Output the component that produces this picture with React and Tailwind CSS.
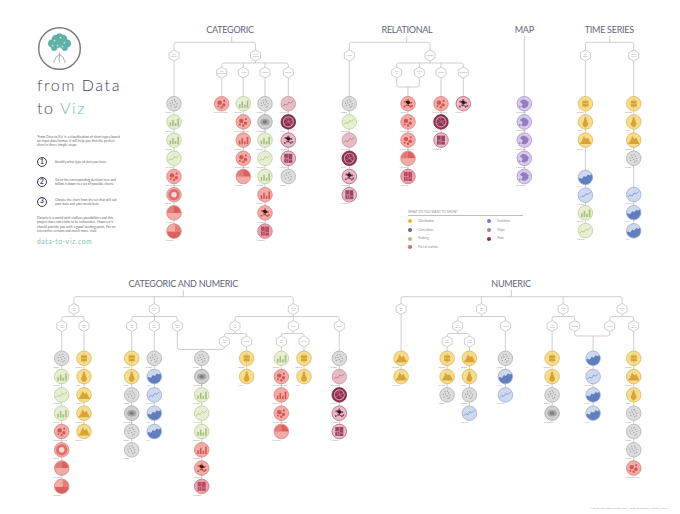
import React from 'react'

const LINE = '#b9b9b9'

// fill, stroke, glyph colour, glyph
const K = {
  gray: ['#dcdcdc', '#a9a9a9', '#8a8a8a', 'scatter'],
  grayB: ['#cfcfcf', '#9f9f9f', '#6f6f6f', 'blob'],
  green: ['#e6eed3', '#b5ca8c', '#9bb768', 'bars'],
  greenL: ['#e6eed3', '#b5ca8c', '#9bb768', 'line'],
  red: ['#f1aca8', '#d97873', '#d4443f', 'bubbles'],
  redRing: ['#f1aca8', '#d97873', '#e0625c', 'ring'],
  redPie: ['#f1aca8', '#d97873', '#d9534f', 'pie'],
  redPie2: ['#f1aca8', '#d97873', '#d9534f', 'pie2'],
  redBars: ['#f1aca8', '#d97873', '#d4443f', 'bars'],
  redDots: ['#f1aca8', '#d97873', '#c8403d', 'dots'],
  redSquare: ['#e8a3ab', '#c46a78', '#b23a55', 'treemap'],
  mauve: ['#e6bdc7', '#c98a9b', '#b0536f', 'line'],
  maroon: ['#8c2f50', '#6e1e3a', '#e5a5b8', 'chord'],
  maroonDots: ['#e6bdc7', '#b0536f', '#8c2f50', 'dots'],
  mauveSquare: ['#e6bdc7', '#b0536f', '#8c2f50', 'treemap'],
  Y: ['#f5dd90', '#d8b04a', '#d29b24', 'square'],
  Ym: ['#f5dd90', '#d8b04a', '#d29b24', 'mountain'],
  Yv: ['#f5dd90', '#d8b04a', '#d29b24', 'violin'],
  B: ['#cfd9ee', '#8ea5d4', '#5a78bd', 'line'],
  Bd: ['#cfd9ee', '#8ea5d4', '#4d6db5', 'area'],
  P: ['#d8cbea', '#9f86c7', '#7b5fb0', 'map'],
}

const NAMES = {
  scatter: 'Scatter', blob: '2D density', bars: 'Barplot', line: 'Line plot',
  bubbles: 'Circular packing', ring: 'Donut', pie: 'Pie chart', pie2: 'Treemap',
  treemap: 'Heatmap', chord: 'Chord', dots: 'Network', square: 'Boxplot',
  mountain: 'Density', violin: 'Violin', area: 'Area', map: 'Choropleth',
}

function Glyph({ ic, c, f }) {
  switch (ic) {
    case 'scatter':
      return [[-3, 2], [-1.5, -1], [0, 1], [1.5, -2], [3, 0], [-2, -3.2], [2.5, 2.6], [0.5, -3.8], [-3.8, -0.5], [1, 3.5]].map(([x, y], i) => (
        <circle key={i} cx={x} cy={y} r={0.6} fill={c} />
      ))
    case 'blob':
      return (
        <>
          <ellipse rx={4.5} ry={3.2} fill={c} opacity={0.5} />
          <ellipse rx={2.2} ry={1.6} fill={c} />
        </>
      )
    case 'bars':
      return [[-4.4, 0.5], [-1.8, -2], [0.8, 1], [3.4, -3.2]].map(([x, y], i) => (
        <rect key={i} x={x} y={y} width={1.6} height={4.2 - y} fill={c} />
      ))
    case 'line':
      return <polyline points="-5.5,2.5 -3.5,0.5 -1.5,1.5 0.5,-1.5 2.5,-0.5 5,-3" fill="none" stroke={c} strokeWidth={0.7} />
    case 'bubbles':
      return [[-2, -1, 2.2], [2.2, 1.2, 1.7], [0, 3.6, 1.2], [2.6, -2.8, 1.1], [-3.4, 2.6, 1]].map(([x, y, r], i) => (
        <circle key={i} cx={x} cy={y} r={r} fill={c} />
      ))
    case 'ring':
      return (
        <>
          <circle r={5.6} fill={c} />
          <circle r={2.8} fill="#fbe3e1" />
        </>
      )
    case 'pie':
      return (
        <>
          <path d="M0 0 V-7 A7 7 0 0 1 7 0 Z" fill={c} />
          <path d="M0 0 H-7 A7 7 0 0 1 0 -7 Z" fill={c} opacity={0.65} />
        </>
      )
    case 'pie2':
      return (
        <>
          <path d="M-7 0.5 H7 V7 H-7 Z" fill={c} />
          <path d="M1 -7 V0.5 H7 V-7 Z" fill={c} opacity={0.6} />
        </>
      )
    case 'treemap':
      return (
        <>
          <rect x={-4} y={-4.5} width={8} height={9} fill={c} />
          <path d="M0 -4.5 V4.5 M-4 0 H0 M0 1.5 H4 M-2 0 V4.5" stroke={f} strokeWidth={0.5} />
        </>
      )
    case 'chord':
      return (
        <>
          <circle r={5} fill="none" stroke={c} strokeWidth={1.1} />
          <path d="M-3.5 -3.5 Q0 0 3.5 3.5 M-4.5 2 Q0 0 4.5 -2 M-1 -4.8 Q0 0 4 3" fill="none" stroke={c} strokeWidth={0.5} />
        </>
      )
    case 'dots':
      return (
        <>
          <path d="M-3 -2 L0 -3.6 L3 -1 L-1 1.5 L2.5 3 M-1 1.5 L-3.5 2.8 M-3 -2 L-1 1.5" stroke={c} strokeWidth={0.3} />
          {[[-3, -2], [0, -3.6], [3, -1], [-1, 1.5], [2.5, 3], [-3.5, 2.8], [4, 2]].map(([x, y], i) => (
            <circle key={i} cx={x} cy={y} r={1} fill={c} />
          ))}
        </>
      )
    case 'square':
      return (
        <>
          <rect x={-3} y={-3} width={6} height={6} fill={c} />
          <path d="M-3 0 H3 M0 -5 V-3 M0 3 V5" stroke={c} strokeWidth={0.5} />
          <path d="M-3 0 H3" stroke={f} strokeWidth={0.5} />
        </>
      )
    case 'mountain':
      return <path d="M-6 4 L-3.5 1 L-1.5 -4 L0.5 -1 L2.5 -2.5 L6 4 Z" fill={c} />
    case 'violin':
      return <path d="M0 -5.5 C1.8 -3.5 0.8 -1.5 2.6 0.8 C3.8 3 1.2 4.8 0 5.5 C-1.2 4.8 -3.8 3 -2.6 0.8 C-0.8 -1.5 -1.8 -3.5 0 -5.5 Z" fill={c} />
    case 'area':
      return <polygon points="-8,8 -8,1.5 -5.5,0.5 -3.5,1.5 -1.5,-1.5 0.5,-0.5 2.5,-3 4.5,-2 8,-4.5 8,8" fill={c} />
    case 'map':
      return (
        <>
          <polygon points="-4.5,-2 -1.5,-4.5 2,-3.5 4.5,-1 3.5,2.5 0.5,4.5 -3,3.5 -1.5,0.5" fill={c} opacity={0.85} />
          <circle cx={-4.5} cy={3} r={0.8} fill={c} />
        </>
      )
    default:
      return null
  }
}

function Dot({ x, y, k }) {
  const [f, s, c, ic] = K[k]
  return (
    <g>
      <g transform={`translate(${x} ${y})`}>
        <circle r={7.3} fill={f} stroke={s} strokeWidth={0.7} />
        <g clipPath="url(#clipc)" opacity={0.85}>
          <Glyph ic={ic} c={c} f={f} />
        </g>
      </g>
      <text x={x - 8.5} y={y + 9.6} fontSize={2} fill="#9a9a9a">{NAMES[ic]}</text>
    </g>
  )
}

function Hex({ x, y, label }) {
  const pts = `${x},${y - 5.5} ${x + 5},${y - 2.6} ${x + 5},${y + 2.6} ${x},${y + 5.5} ${x - 5},${y + 2.6} ${x - 5},${y - 2.6}`
  const words = label.split(' ')
  return (
    <g>
      <polygon points={pts} fill="#fff" stroke={LINE} strokeWidth={0.7} />
      {words.map((w, i) => (
        <text key={i} x={x} y={y - (words.length - 1) * 1 + i * 2 + 0.6} fontSize={1.6} fill="#999" textAnchor="middle">{w}</text>
      ))}
    </g>
  )
}

function Col({ x, top, k, y0, sp, ys }) {
  const pos = ys || k.map((_, i) => y0 + i * sp)
  return (
    <g>
      <path d={`M${x} ${top} V${pos[pos.length - 1]}`} stroke={LINE} strokeWidth={0.7} fill="none" />
      {k.map((kk, i) => (
        <Dot key={i} x={x} y={pos[i]} k={kk} />
      ))}
    </g>
  )
}

const V = (x, a, b) => `M${x} ${a} V${b}`
const bar = (x1, x2, y, d1, d2, r = 2) =>
  `M${x1} ${d1} V${y + r} Q${x1} ${y} ${x1 + r} ${y} H${x2 - r} Q${x2} ${y} ${x2} ${y + r} V${d2}`
const join = (x1, x2, y, u1, u2, r = 2) =>
  `M${x1} ${u1} V${y - r} Q${x1} ${y} ${x1 + r} ${y} H${x2 - r} Q${x2} ${y} ${x2} ${y - r} V${u2}`

function Tree({ paths = [], hexes = [], cols = [], y0, sp }) {
  return (
    <g>
      <defs>
        <clipPath id="clipc">
          <circle r={6.9} />
        </clipPath>
      </defs>
      {paths.map((d, i) => (
        <path key={i} d={d} stroke={LINE} strokeWidth={0.7} fill="none" />
      ))}
      {cols.map((c, i) => (
        <Col key={i} {...c} y0={y0} sp={sp} />
      ))}
      {hexes.map(([x, y, l], i) => (
        <Hex key={i} x={x} y={y} label={l} />
      ))}
    </g>
  )
}

function Section({ className, title, x0, y0, w, h, children }) {
  return (
    <div className={`flex flex-col shrink-0 ${className}`}>
      <div className="h-[13px] text-center text-[9px] leading-[13px] tracking-[-0.03em] text-[#62667a] whitespace-nowrap">{title}</div>
      <svg width={w} height={h} viewBox={`${x0} ${y0} ${w} ${h}`} className="block overflow-visible">
        {children}
      </svg>
    </div>
  )
}

const TY = 103.7
const TS = 18.2
const BY = 358.3
const BS = 18.3

function Logo() {
  return (
    <svg width="45" height="45" viewBox="0 0 46 46">
      <circle cx="23" cy="23" r="21.3" fill="#fff" stroke="#7b7b7b" strokeWidth="1.5" />
      <path d="M23 25 V31 M23 29 Q19 31 18 35 M23 29 Q27 31 28 35 M23 31 Q22 34 23 37 M18 35 q-2 2 0 3 M28 35 q2 2 0 3" stroke="#8a8a8a" strokeWidth="0.7" fill="none" />
      {[[15.5, 18, 4.2], [19.5, 13.5, 4.6], [26.5, 13.5, 4.6], [30.5, 18, 4.2], [23, 18.5, 5], [17.5, 22.5, 3], [28.5, 22.5, 3], [23, 10.5, 3.2]].map(([x, y, r], i) => (
        <circle key={i} cx={x} cy={y} r={r} fill="#5fb3a5" />
      ))}
      {[[18, 15], [24, 12], [28, 17], [21, 20], [16, 20], [26, 21]].map(([x, y], i) => (
        <circle key={i} cx={x} cy={y} r="0.9" fill="#bfe3dc" />
      ))}
      <rect x="21.8" y="22" width="2.4" height="5" fill="#fff" />
    </svg>
  )
}

function Step({ n, children, className }) {
  return (
    <div className={`flex items-center ${className}`}>
      <div className="w-[10px] h-[10px] shrink-0 rounded-full border border-[#3d3e5e] flex items-center justify-center text-[6.5px] font-bold leading-none text-[#3d3e5e]">{n}</div>
      <div className="ml-[8px] w-[66px] text-[3.3px] leading-[4px] text-[#6a6a6a]">{children}</div>
    </div>
  )
}

function Intro() {
  return (
    <div className="w-[160px] shrink-0 pl-[37px] pt-[2.5px] flex flex-col">
      <Logo />
      <div className="mt-[2.8px] h-[23px] text-[16px] leading-[23px] tracking-[0.1em] font-light text-[#4a4a55] whitespace-nowrap">
        from <span className="text-[#3a3b63]">Data</span>
      </div>
      <div className="h-[23px] text-[16px] leading-[23px] tracking-[0.1em] font-light text-[#4a4a55] whitespace-nowrap">
        to <span className="text-[#6fbaad]">Viz</span>
      </div>
      <p className="mt-[15.3px] w-[84px] text-[3.4px] leading-[4.2px] text-[#6a6a6a]">
        ‘From Data to Viz’ is a classification of chart types based on input data format. It will help you find the perfect chart in three simple steps:
      </p>
      <Step n="1" className="mt-[10px]">Identify what type of data you have.</Step>
      <Step n="2" className="mt-[10px]">Go to the corresponding decision tree and follow it down to a set of possible charts.</Step>
      <Step n="3" className="mt-[9.4px]">Choose the chart from the set that will suit your data and your needs best.</Step>
      <p className="mt-[9.5px] w-[84px] text-[3.4px] leading-[4.2px] text-[#6a6a6a]">
        Dataviz is a world with endless possibilities and this project does not claim to be exhaustive. However it should provide you with a good starting point. For an interactive version and much more, visit:
      </p>
      <div className="mt-[4.5px] text-[6.6px] leading-[8px] tracking-[0.1em] text-[#7fbdb3]">data-to-viz.com</div>
    </div>
  )
}

const LEGEND = [
  ['Distribution', 'bg-[#e8b93a]'],
  ['Evolution', 'bg-[#6a7fc0]'],
  ['Correlation', 'bg-[#6b6d70]'],
  ['Maps', 'bg-[#9a7cc0]'],
  ['Ranking', 'bg-[#a9c57a]'],
  ['Flow', 'bg-[#8c2f50]'],
  ['Part of a whole', 'bg-[#e0605a]'],
]

function Legend() {
  return (
    <div className="ml-[68.3px] mt-[1.7px] w-[115px]">
      <div className="border-b border-[#bdbdbd] pb-[1px] text-[3px] leading-[4px] tracking-[0.03em] text-[#8a8a8a]">WHAT DO YOU WANT TO SHOW?</div>
      <div className="mt-[1.4px] grid grid-cols-[79px_1fr]">
        {LEGEND.map(([l, c]) => (
          <div key={l} className="flex h-[8.6px] items-center">
            <div className={`w-[4px] h-[4px] rounded-full ${c}`} />
            <span className="ml-[6px] text-[3px] text-[#8a8a8a]">{l}</span>
          </div>
        ))}
      </div>
    </div>
  )
}

export default function App() {
  return (
    <div className="w-[680px] h-[514px] overflow-hidden bg-white font-['Lato',sans-serif] flex flex-col">
      <div className="flex items-start h-[262px] pt-[23px] shrink-0">
        <Intro />
        <Section className="w-[140px]" title="CATEGORIC" x0={160} y0={36} w={140} h={214}>
          <Tree
            y0={TY}
            sp={TS}
            paths={[V(231.7, 36, 42.3), bar(174, 255.5, 42.3, 50, 50), V(255.5, 61, 63), bar(221.7, 288.3, 63, 67, 67), V(243.3, 63, 67), V(265, 63, 67)]}
            hexes={[[174, 55.5, 'One variable'], [255.5, 55.5, 'Several variables'], [221.7, 72.5, 'Two independent'], [243.3, 72.5, 'Nested'], [265, 72.5, 'Subgroup'], [288.3, 72.5, 'Adjacency']]}
            cols={[
              { x: 174, top: 61, k: ['gray', 'green', 'green', 'greenL', 'red', 'redRing', 'redPie', 'redPie2'] },
              { x: 221.7, top: 78, k: ['red'] },
              { x: 243.3, top: 78, k: ['green', 'red', 'redBars', 'red', 'redPie'] },
              { x: 265, top: 78, k: ['gray', 'grayB', 'green', 'greenL', 'green', 'redBars', 'redDots', 'redSquare'] },
              { x: 288.3, top: 78, k: ['mauve', 'maroon', 'maroonDots', 'mauveSquare', 'gray'] },
            ]}
          />
        </Section>
        <div className="w-[40px] shrink-0" />
        <div className="flex flex-col w-[234.6px] shrink-0">
          <div className="flex">
            <Section className="w-[134px]" title="RELATIONAL" x0={340} y0={36} w={134} h={172}>
              <Tree
                y0={TY}
                sp={TS}
                paths={[
                  V(406.7, 36, 42.3), bar(349.3, 430, 42.3, 50, 50), V(430, 61, 63), bar(396.7, 463.3, 63, 67, 67),
                  V(419.3, 63, 67), V(441, 63, 67), join(396.7, 419.3, 87, 78, 78),
                ]}
                hexes={[[349.3, 55.5, 'Nested'], [430, 55.5, 'Adjacency'], [396.7, 72.5, 'Two var'], [419.3, 72.5, 'Several var'], [441, 72.5, 'Directed'], [463.3, 72.5, 'Undirected']]}
                cols={[
                  { x: 349.3, top: 61, k: ['gray', 'greenL', 'mauve', 'maroon', 'maroonDots', 'mauveSquare'] },
                  { x: 408, top: 87, k: ['redDots', 'red', 'red', 'redPie', 'redSquare'] },
                  { x: 441, top: 78, k: ['red', 'maroon', 'mauveSquare'] },
                  { x: 463.3, top: 78, k: ['maroonDots'] },
                ]}
              />
            </Section>
            <Section className="w-[100.6px]" title="MAP" x0={474} y0={36} w={100.6} h={172}>
              <Tree y0={TY} sp={TS} cols={[{ x: 524.3, top: 36, k: ['P', 'P', 'P', 'P', 'P'] }]} />
            </Section>
          </div>
          <Legend />
        </div>
        <Section className="w-[69.4px]" title="TIME SERIES" x0={574.6} y0={36} w={69.4} h={214}>
          <Tree
            y0={TY}
            sp={TS}
            paths={[V(609.3, 36, 42.3), bar(585, 633.3, 42.3, 50, 50)]}
            hexes={[[585, 55.5, 'One series'], [633.3, 55.5, 'Several series']]}
            cols={[
              { x: 585, top: 61, k: ['Y', 'Yv', 'Ym', 'Bd', 'B', 'green', 'greenL'], ys: [103.7, 121.9, 140.1, 177.5, 195.2, 212.9, 230.6] },
              { x: 633.3, top: 61, k: ['Y', 'Yv', 'Ym', 'gray', 'B', 'Bd', 'Bd'], ys: [103.7, 121.9, 140.1, 158.3, 194.5, 212.7, 230.9] },
            ]}
          />
        </Section>
      </div>

      <div className="flex items-start pt-[14.8px] shrink-0">
        <Section className="w-[366.6px]" title="CATEGORIC AND NUMERIC" x0={0} y0={290} w={366.6} h={210}>
          <Tree
            y0={BY}
            sp={BS}
            paths={[
              V(183.3, 290, 296.7), bar(74, 293.3, 296.7, 303.5, 303.5), V(154.3, 296.7, 303.5),
              V(74, 314.5, 316.5), bar(61.7, 84, 316.5, 320.5, 320.5),
              V(154.3, 314.5, 320.5), bar(131.7, 177.3, 316.5, 320.5, 320.5),
              V(293.3, 314.5, 320.5), bar(235, 339.3, 316.5, 320.5, 320.5),
              V(235, 331.5, 333.5), bar(224.3, 246.7, 333.5, 336, 336),
              V(293.3, 331.5, 333.5), bar(281.3, 304, 333.5, 336, 336),
              join(177.3, 224.3, 349.5, 331.5, 347),
            ]}
            hexes={[
              [74, 309, 'One obs'], [154.3, 309, 'Several obs'], [293.3, 309, 'Several num'],
              [61.7, 326, 'One num'], [84, 326, 'Several num'], [131.7, 326, 'One num'], [154.3, 326, 'Two num'], [177.3, 326, 'Several num'],
              [235, 326, 'No order'], [293.3, 326, 'Order'], [339.3, 326, 'Several'],
              [224.3, 341.5, 'One num'], [246.7, 341.5, 'Several'], [281.3, 341.5, 'One num'], [304, 341.5, 'Several'],
            ]}
            cols={[
              { x: 61.7, top: 331.5, k: ['gray', 'green', 'greenL', 'green', 'red', 'redRing', 'redPie', 'redPie2'] },
              { x: 84, top: 331.5, k: ['Y', 'Yv', 'Ym', 'Ym', 'Ym'] },
              { x: 131.7, top: 331.5, k: ['Y', 'Yv', 'gray', 'grayB', 'gray', 'gray'] },
              { x: 154.3, top: 331.5, k: ['gray', 'Bd', 'B', 'Bd', 'Bd'] },
              { x: 201.7, top: 349.5, k: ['gray', 'grayB', 'green', 'greenL', 'green', 'redBars', 'redDots', 'redSquare'] },
              { x: 246.7, top: 347, k: ['Y', 'Yv'] },
              { x: 281.3, top: 347, k: ['green', 'red', 'redBars', 'red', 'redPie'] },
              { x: 304, top: 347, k: ['Y', 'Yv'] },
              { x: 339.3, top: 331.5, k: ['gray', 'mauve', 'maroon', 'maroonDots', 'mauveSquare'] },
            ]}
          />
        </Section>
        <Section className="w-[288.8px]" title="NUMERIC" x0={366.6} y0={290} w={288.8} h={210}>
          <Tree
            y0={BY}
            sp={BS}
            paths={[
              V(511, 290, 296.7), bar(400.7, 621.7, 296.7, 303.5, 303.5), V(481, 296.7, 303.5), V(562.7, 296.7, 303.5),
              V(481, 314.5, 316.5), bar(457.3, 505, 316.5, 320.5, 320.5),
              V(562.7, 314.5, 316.5), bar(551.7, 574.3, 316.5, 320.5, 320.5),
              V(621.7, 314.5, 316.5), bar(609.3, 633.3, 316.5, 320.5, 320.5),
              V(457.3, 331.5, 333.5), bar(446.7, 469, 333.5, 336, 336),
              join(574.3, 609.3, 336, 331.5, 331.5),
            ]}
            hexes={[
              [400.7, 309, 'One var'], [481, 309, 'Two var'], [562.7, 309, 'Three var'], [621.7, 309, 'Several var'],
              [457.3, 326, 'Not ordered'], [505, 326, 'Ordered'], [551.7, 326, 'Not ordered'], [574.3, 326, 'Ordered'],
              [609.3, 326, 'Ordered'], [633.3, 326, 'Not ordered'],
              [446.7, 341.5, 'Few points'], [469, 341.5, 'Many points'],
            ]}
            cols={[
              { x: 400.7, top: 314.5, k: ['Ym', 'Ym'] },
              { x: 446.7, top: 347, k: ['Y', 'Ym', 'gray'] },
              { x: 469, top: 347, k: ['Ym', 'Yv', 'gray', 'B'] },
              { x: 505, top: 331.5, k: ['gray', 'Bd', 'B'] },
              { x: 551.7, top: 331.5, k: ['Y', 'Yv', 'gray', 'grayB'] },
              { x: 592.7, top: 336, k: ['Bd', 'B', 'Bd', 'Bd'] },
              { x: 633.3, top: 331.5, k: ['Y', 'Ym', 'Yv', 'gray', 'gray', 'gray', 'red'] },
            ]}
          />
        </Section>
      </div>
      <div className="flex justify-end pr-[12px] mt-[7px]">
        <span className="text-[2.6px] leading-[3px] text-[#9a9a9a]">© 2018 Yan Holtz &amp; Conor Healy — data-to-viz.com — CC BY-NC-SA</span>
      </div>
    </div>
  )
}
